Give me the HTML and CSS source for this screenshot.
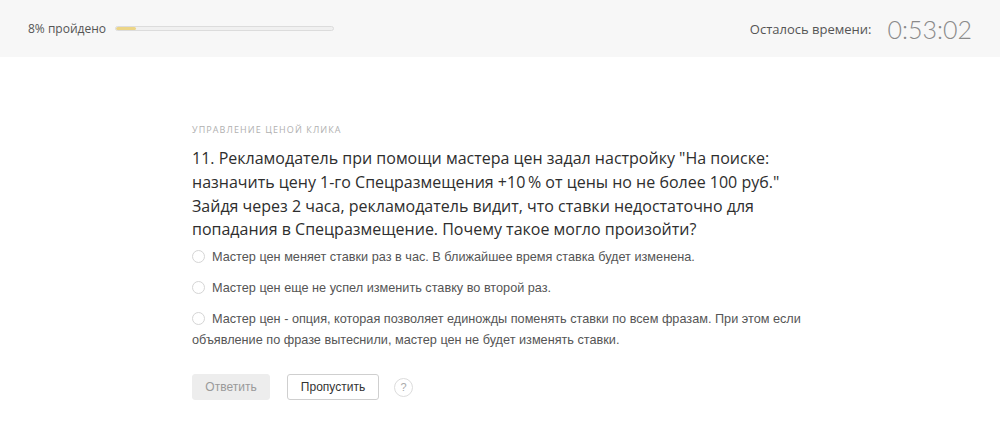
FILE: index.html
```
<!DOCTYPE html>
<html lang="ru">
<head>
<meta charset="utf-8">
<link rel="stylesheet" href="styles.css">
</head>
<body>
<header class="topbar">
  <div class="progress">
    <span class="progress-label">8% пройдено</span>
    <div class="progress-track"><div class="progress-fill" style="width:9%"></div></div>
  </div>
  <div class="timer">
    <span class="timer-label">Осталось времени:</span>
    <span class="timer-value">0:53:02</span>
  </div>
</header>
<main class="content">
  <div class="category">Управление ценой клика</div>
  <h1 class="question">11. Рекламодатель при помощи мастера цен задал настройку "На поиске: назначить цену 1-го Спецразмещения +10&#8201;% от цены но не более 100 руб." Зайдя через 2 часа, рекламодатель видит, что ставки недостаточно для попадания в Спецразмещение. Почему такое могло произойти?</h1>
  <ul class="options">
    <li class="option"><span class="radio"></span>Мастер цен меняет ставки раз в час. В ближайшее время ставка будет изменена.</li>
    <li class="option"><span class="radio"></span>Мастер цен еще не успел изменить ставку во второй раз.</li>
    <li class="option"><span class="radio"></span>Мастер цен - опция, которая позволяет единожды поменять ставки по всем фразам. При этом если объявление по фразе вытеснили, мастер цен не будет изменять ставки.</li>
  </ul>
  <div class="actions">
    <button class="btn btn-disabled">Ответить</button>
    <button class="btn btn-skip">Пропустить</button>
    <span class="help">?</span>
  </div>
</main>
</body>
</html>
```
FILE: styles.css
```
* { box-sizing: border-box; }
html, body { margin: 0; padding: 0; background: #fff; }
body { font-family: "Open Sans", "Noto Sans", sans-serif; color: #333; }

.topbar {
  height: 57px;
  background: #f7f7f7;
  display: flex;
  align-items: center;
  justify-content: space-between;
  padding: 0 28px 0 28px;
}
.progress { display: flex; align-items: center; gap: 9px; }
.progress-label { font-size: 12px; color: #555; }
.progress-track {
  width: 219px;
  height: 5px;
  border: 1px solid #dcdcdc;
  border-radius: 3px;
  background: #f0f0f0;
  overflow: hidden;
}
.progress-fill { height: 100%; background: #ecd587; border-radius: 3px; }

.timer { display: flex; align-items: center; gap: 16px; }
.timer-label { font-size: 13px; color: #555; }
.timer-value {
  font-family: "Lato", "Roboto", sans-serif;
  font-weight: 300;
  font-size: 25px;
  color: #8a8a8a;
  letter-spacing: 0;
}

.content { padding: 67px 0 0 192px; }
.category {
  font-size: 9px;
  text-transform: uppercase;
  letter-spacing: 1.1px;
  color: #b0b0b0;
  line-height: 12px;
}
.question {
  margin: 11px 0 0 0;
  width: 595px;
  font-size: 16px;
  font-weight: 400;
  line-height: 23.8px;
  color: #2e2e2e;
}
.options {
  list-style: none;
  margin: 5px 0 0 0;
  padding: 0;
  width: 640px;
  font-family: "Liberation Sans", Arial, sans-serif;
  font-size: 12.7px;
  color: #555;
}
.option { line-height: 21px; margin-bottom: 10px; }
.radio {
  display: inline-block;
  width: 13px;
  height: 13px;
  border: 1px solid #d5d5d5;
  border-radius: 50%;
  vertical-align: -2px;
  margin-right: 7px;
  background: #fff;
}
.actions {
  display: flex;
  align-items: center;
  gap: 17px;
  margin-top: 23px;
}
.btn {
  font-family: "Liberation Sans", Arial, sans-serif;
  font-size: 12px;
  height: 26px;
  border-radius: 3px;
  padding: 0 12px;
  cursor: pointer;
}
.btn-disabled {
  background: #ededed;
  border: 1px solid #ededed;
  color: #9a9a9a;
  width: 78px;
}
.btn-skip {
  background: #fff;
  border: 1px solid #cfcfcf;
  color: #333;
  width: 92px;
}
.help {
  width: 19px;
  height: 19px;
  border: 1px solid #dcdcdc;
  border-radius: 50%;
  display: inline-flex;
  align-items: center;
  justify-content: center;
  font-family: "Liberation Sans", Arial, sans-serif;
  font-size: 11px;
  color: #aaa;
  margin-left: -2px;
}
```
